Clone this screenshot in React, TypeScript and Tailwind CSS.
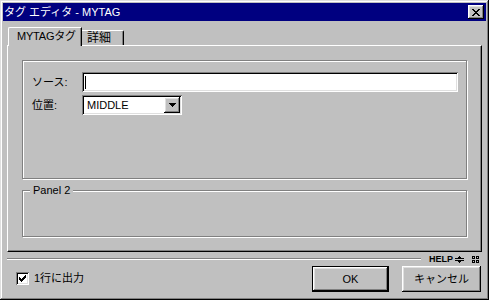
import React from 'react';

const raised =
  'shadow-[inset_-1px_-1px_#000,inset_1px_1px_#fff,inset_-2px_-2px_#808080,inset_2px_2px_#dfdfdf]';
const sunken =
  'shadow-[inset_1px_1px_#808080,inset_-1px_-1px_#fff,inset_2px_2px_#000,inset_-2px_-2px_#dfdfdf]';
const etched = 'border border-[#808080] shadow-[1px_1px_0_#fff,inset_1px_1px_0_#fff]';

const Pixels = ({ rows, className }: { rows: string[]; className?: string }) => (
  <svg
    width={rows[0].length}
    height={rows.length}
    viewBox={`0 0 ${rows[0].length} ${rows.length}`}
    shapeRendering="crispEdges"
    fill="currentColor"
    className={className}
  >
    {rows.flatMap((r, y) =>
      [...r].map((c, x) => (c === 'X' ? <rect key={`${x}-${y}`} x={x} y={y} width={1} height={1} /> : null))
    )}
  </svg>
);

const closeX = ['XX....XX', '.XX..XX.', '..XXXX..', '...XX...', '..XXXX..', '.XX..XX.', 'XX....XX'];
const check = ['......X', '.....XX', 'X...XXX', 'XX.XXX.', 'XXXXX..', '.XXX...', '..X....'];
const arrow = ['XXXXXXX', '.XXXXX.', '..XXX..', '...X...'];
const splitter = ['....X....', '...XXX...', 'XXXXXXXXX', '.........', 'XXXXXXXXX', '...XXX...', '....X....'];
const grip = ['XXX.XXX', 'X.X.X.X', 'XXX.XXX', '.......', 'XXX.XXX', 'X.X.X.X', 'XXX.XXX'];

export default function App() {
  return (
    <div
      className={`w-[489px] h-[300px] bg-[#c0c0c0] p-[3px] flex flex-col text-[11px] text-black font-['Liberation_Sans','Noto_Sans_CJK_JP',sans-serif] shadow-[inset_-1px_-1px_#000,inset_1px_1px_#dfdfdf,inset_-2px_-2px_#808080,inset_2px_2px_#fff]`}
    >
      {/* title bar */}
      <div className="h-[18px] bg-[#000080] flex items-center justify-between pl-[1px] pr-[2px]">
        <span className="text-white leading-none">タグ エディタ - MYTAG</span>
        <button className={`w-[16px] h-[14px] bg-[#c0c0c0] flex items-center justify-center ${raised}`}>
          <Pixels rows={closeX} className="text-black" />
        </button>
      </div>

      {/* tabs */}
      <div className="mt-[6px] ml-[4px] w-[475px] flex flex-col">
        <div className="h-[18px] flex items-end pl-[1px]">
          <div className="relative z-10 h-[19px] w-[74px] -mb-px bg-[#c0c0c0] border-l border-t border-r border-white border-r-black rounded-tl-[2px] shadow-[inset_-1px_0_#808080] flex items-center whitespace-nowrap pl-[8px] pb-[2px] tracking-[-0.2px]">
            MYTAGタグ
          </div>
          <div className="h-[15px] w-[42px] bg-[#c0c0c0] border-t border-r border-white border-r-black rounded-tr-[2px] shadow-[inset_-1px_0_#808080] flex items-center pl-[5px] text-[12px]">
            詳細
          </div>
        </div>

        <div className="h-[207px] border-t border-l border-white border-r border-b border-r-black border-b-black shadow-[inset_-1px_-1px_#808080] pt-[14px] pl-[14px] pr-[14px] flex flex-col">
          <div className={`h-[119px] ${etched} pt-[11px] pl-[9px] pr-[8px] flex flex-col gap-[3px]`}>
            <div className="h-[20px] flex items-center">
              <span className="w-[50px]">ソース:</span>
              <div className={`flex-1 h-[20px] bg-white flex items-center pl-[3px] ${sunken}`}>
                <div className="w-px h-[13px] bg-black" />
              </div>
            </div>
            <div className="h-[20px] flex items-center">
              <span className="w-[50px]">位置:</span>
              <div className={`w-[100px] h-[20px] bg-white flex items-center justify-between pl-[5px] pr-[2px] ${sunken}`}>
                <span>MIDDLE</span>
                <div className={`w-[16px] h-[16px] bg-[#c0c0c0] flex items-center justify-center ${raised}`}>
                  <Pixels rows={arrow} />
                </div>
              </div>
            </div>
          </div>

          <div className={`relative mt-[11px] h-[47px] ${etched}`}>
            <span className="absolute left-[7px] -top-[8px] bg-[#c0c0c0] px-[3px] leading-[14px]">Panel 2</span>
          </div>
        </div>
      </div>

      {/* separator + help */}
      <div className="h-[14px] ml-[4px] mr-[7px] flex items-center">
        <div className="flex-1 h-[2px] border-t border-[#808080] border-b border-b-white" />
        <span className="ml-[8px] text-[9px] font-bold leading-none font-['Liberation_Sans',sans-serif]">HELP</span>
        <Pixels rows={splitter} className="ml-[2px]" />
        <Pixels rows={grip} className="ml-[8px]" />
      </div>

      {/* bottom row */}
      <div className="h-[26px] flex items-center">
        <div className="ml-[13px] -mt-[2px] flex items-center gap-[5px]">
          <div className={`w-[13px] h-[13px] bg-white flex items-center justify-center ${sunken}`}>
            <Pixels rows={check} />
          </div>
          <span>1行に出力</span>
        </div>
        <div className="ml-auto mr-[5px] flex gap-[13px]">
          <button className={`w-[77px] h-[26px] bg-[#c0c0c0] border border-black flex items-center justify-center ${raised}`}>
            OK
          </button>
          <button className={`w-[79px] h-[26px] bg-[#c0c0c0] flex items-center justify-center ${raised}`}>
            キャンセル
          </button>
        </div>
      </div>
    </div>
  );
}
